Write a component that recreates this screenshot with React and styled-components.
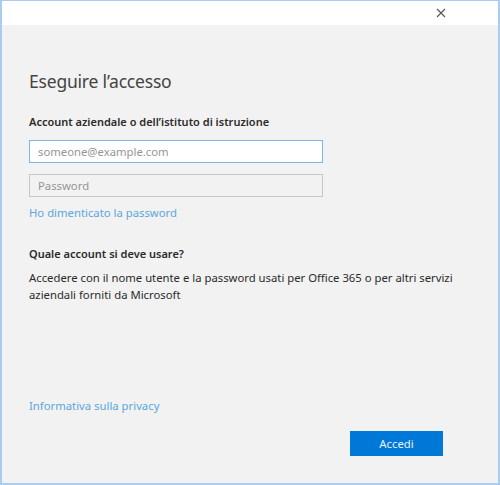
import styled, { createGlobalStyle } from "styled-components";

const GlobalStyle = createGlobalStyle`
  html, body {
    margin: 0;
    padding: 0;
    background: #ffffff;
  }
  body {
    font-family: "Noto Sans", "Open Sans", sans-serif;
  }
`;

const Window = styled.div`
  box-sizing: border-box;
  width: 500px;
  height: 485px;
  border: 2px solid #a9cdf0;
  border-top-width: 1px;
  display: flex;
  flex-direction: column;
  background: #f2f2f2;
`;

const TitleBar = styled.div`
  height: 24px;
  background: #ffffff;
  display: flex;
  justify-content: flex-end;
  align-items: center;
  padding-right: 51px;
  flex-shrink: 0;
`;

const CloseButton = styled.button`
  border: 0;
  background: transparent;
  padding: 0;
  width: 12px;
  height: 12px;
  display: flex;
  align-items: center;
  justify-content: center;
  cursor: pointer;
`;

const Body = styled.div`
  flex: 1;
  display: flex;
  flex-direction: column;
  padding: 44px 0 0 27px;
  color: #222;
`;

const Title = styled.h1`
  margin: 0;
  font-size: 17.5px;
  font-weight: 400;
  line-height: 24px;
  color: #444;
  letter-spacing: -0.2px;
`;

const Label = styled.div`
  margin-top: 21px;
  font-size: 11px;
  font-weight: 600;
  line-height: 16px;
  color: #2b2b2b;
`;

const Input = styled.input`
  box-sizing: border-box;
  display: block;
  width: 294px;
  height: 23px;
  margin-top: ${p => p.$top}px;
  padding: 0 8px;
  font-family: inherit;
  font-size: 11.3px;
  outline: none;
  border: 1px solid ${p => (p.$focused ? "#7ab8ec" : "#c6c6c6")};
  background: ${p => (p.$focused ? "#ffffff" : "#f2f2f2")};
  color: #333;
  &::placeholder {
    color: #959595;
  }
`;

const Link = styled.a`
  display: block;
  margin-top: ${p => p.$top}px;
  font-size: 11.3px;
  line-height: 16px;
  color: #5aa8dc;
  text-decoration: none;
  cursor: pointer;
`;

const Question = styled.div`
  margin-top: 25px;
  font-size: 11px;
  font-weight: 600;
  line-height: 16px;
  color: #2b2b2b;
`;

const Text = styled.p`
  margin: 7px 0 0;
  width: 440px;
  font-size: 11.3px;
  line-height: 17px;
  color: #2b2b2b;
`;

const Spacer = styled.div`
  flex: 1;
`;

const Footer = styled.div`
  display: flex;
  justify-content: flex-end;
  padding: 17px 55px 27px 0;
`;

const PrimaryButton = styled.button`
  width: 93px;
  height: 25px;
  border: 0;
  background: #0078d7;
  color: #e8f2fc;
  font-family: inherit;
  font-size: 11.3px;
  cursor: pointer;
`;

export default function App() {
  return (
    <>
      <GlobalStyle />
      <Window>
        <TitleBar>
          <CloseButton aria-label="Chiudi">
            <svg width="10" height="10" viewBox="0 0 10 10">
              <path d="M1 1 L9 9 M9 1 L1 9" stroke="#555" strokeWidth="1.1" />
            </svg>
          </CloseButton>
        </TitleBar>
        <Body>
          <Title>Eseguire l’accesso</Title>
          <Label>Account aziendale o dell’istituto di istruzione</Label>
          <Input $top={10} $focused placeholder="someone@example.com" />
          <Input $top={11} type="password" placeholder="Password" />
          <Link $top={8}>Ho dimenticato la password</Link>
          <Question>Quale account si deve usare?</Question>
          <Text>
            Accedere con il nome utente e la password usati per Office 365 o per altri servizi
            aziendali forniti da Microsoft
          </Text>
          <Spacer />
          <Link $top={0}>Informativa sulla privacy</Link>
          <Footer>
            <PrimaryButton>Accedi</PrimaryButton>
          </Footer>
        </Body>
      </Window>
    </>
  );
}
